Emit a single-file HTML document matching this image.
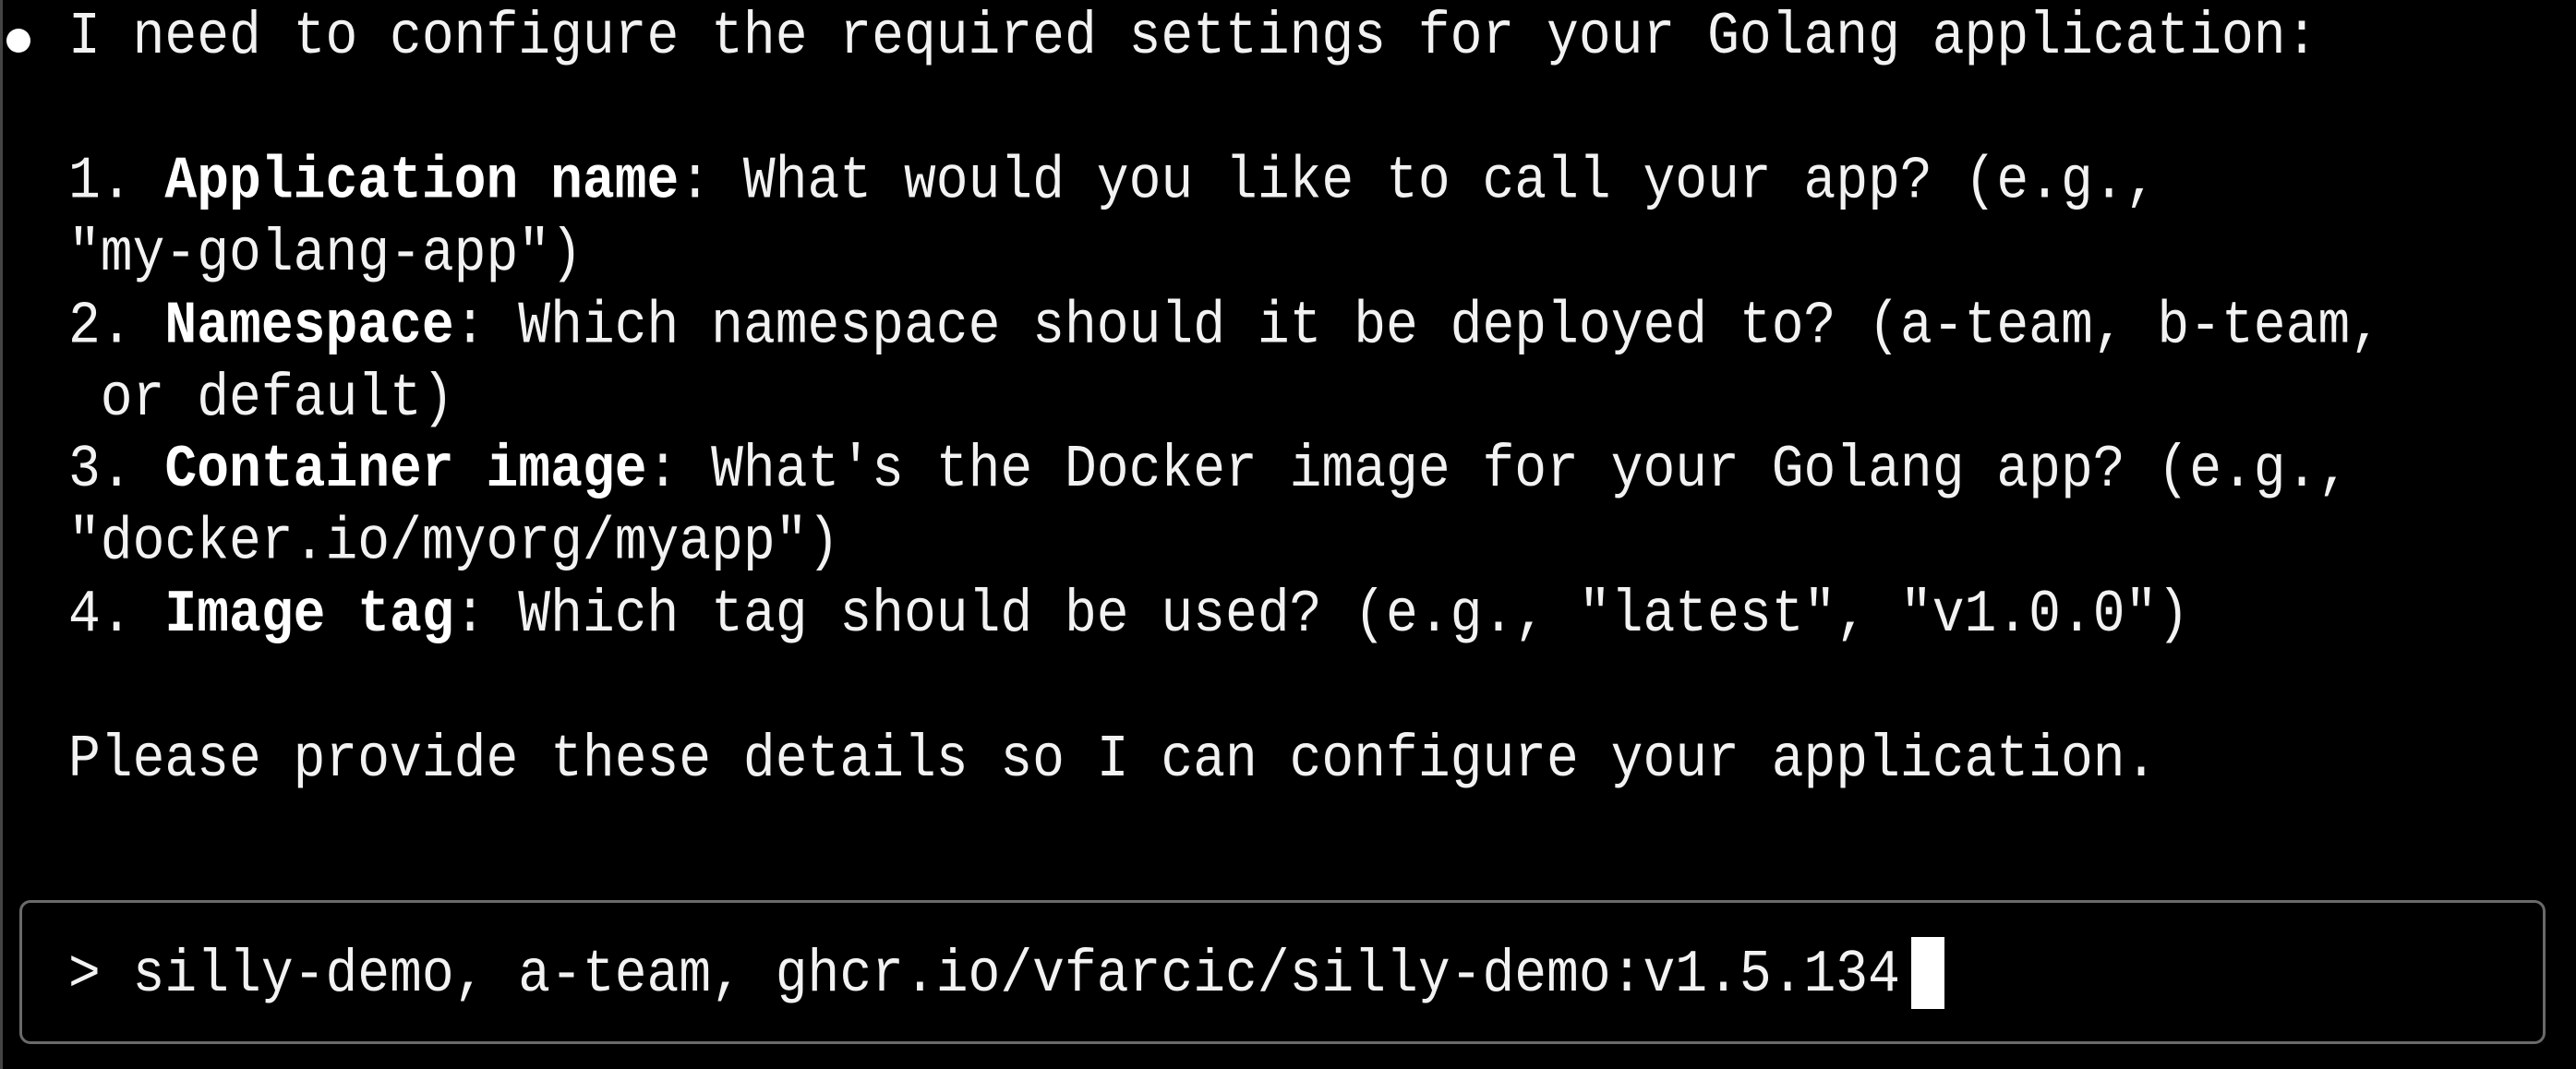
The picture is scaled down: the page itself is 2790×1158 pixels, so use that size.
<!DOCTYPE html>
<html><head><meta charset="utf-8"><style>
html,body{margin:0;padding:0;background:#000;}
body{width:2790px;height:1158px;overflow:hidden;position:relative;border-left:3px solid #444;box-sizing:border-box;}
.t{position:absolute;left:71px;top:2px;font-family:"Liberation Mono","DejaVu Sans Mono",monospace;font-size:58px;line-height:69.9px;color:#f2f2f2;white-space:pre;transform:scaleY(1.12);transform-origin:0 0;}
b{color:#fff;}
.dot{position:absolute;left:4px;top:31px;width:26px;height:26px;border-radius:50%;background:#fff;}
.box{position:absolute;left:18px;top:975px;width:2736px;height:156px;box-sizing:border-box;border:3px solid #6a6a6a;border-radius:12px;}
.in{position:absolute;left:71px;top:1018px;font-family:"Liberation Mono","DejaVu Sans Mono",monospace;font-size:58px;line-height:69.9px;color:#f2f2f2;white-space:pre;transform:scaleY(1.12);transform-origin:0 0;}
.cur{position:absolute;left:2067px;top:1015px;width:36px;height:78px;background:#fff;}
</style></head><body>
<div class="dot"></div>
<div class="t">I need to configure the required settings for your Golang application:

1. <b>Application name</b>: What would you like to call your app? (e.g.,
"my-golang-app")
2. <b>Namespace</b>: Which namespace should it be deployed to? (a-team, b-team,
 or default)
3. <b>Container image</b>: What's the Docker image for your Golang app? (e.g.,
"docker.io/myorg/myapp")
4. <b>Image tag</b>: Which tag should be used? (e.g., "latest", "v1.0.0")

Please provide these details so I can configure your application.</div>
<div class="box"></div>
<div class="in">&gt; silly-demo, a-team, ghcr.io/vfarcic/silly-demo:v1.5.134</div>
<div class="cur"></div>
</body></html>
